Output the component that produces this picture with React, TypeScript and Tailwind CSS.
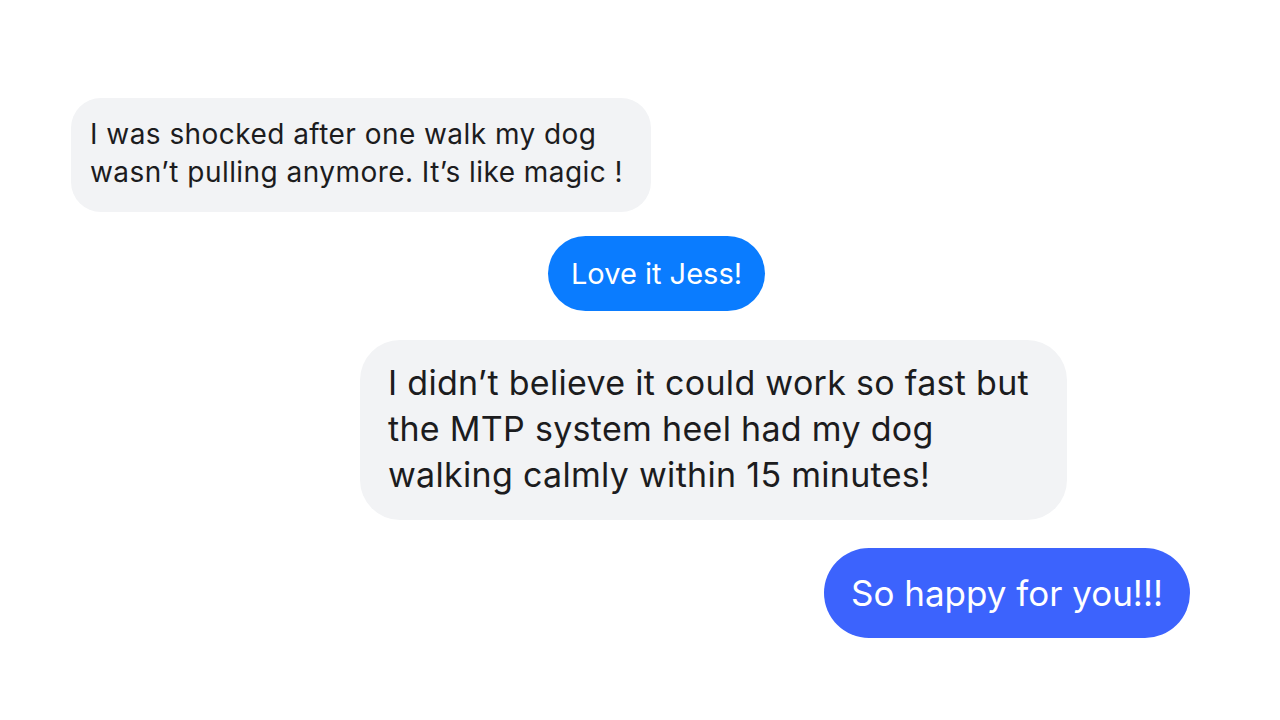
import React from "react";

const font = { fontFamily: "Inter, 'Noto Sans', 'Liberation Sans', sans-serif" };

export default function App() {
  return (
    <div className="w-[1280px] h-[720px] bg-white overflow-hidden" style={font}>
      <div className="flex flex-col pt-[98px]">
        <div className="ml-[71px] w-[580px] rounded-[30px] bg-[#f2f3f5] pl-[19px] pt-[17px] pb-[21px] text-[28px] leading-[38px] text-[#1c1c1e] tracking-[0.45px]">
          I was shocked after one walk my dog
          <br />
          wasn’t pulling anymore. It’s like magic !
        </div>

        <div className="mt-[24px] ml-[548px] w-[217px] h-[75px] flex items-center justify-center rounded-full bg-[#0a7cff] text-[29px] text-white">
          Love it Jess!
        </div>

        <div className="mt-[29px] ml-[360px] w-[707px] rounded-[40px] bg-[#f2f3f5] pl-[28px] pt-[20px] pb-[22px] text-[34px] leading-[46px] text-[#1c1c1e] tracking-[0.3px]">
          I didn’t believe it could work so fast but
          <br />
          the MTP system heel had my dog
          <br />
          walking calmly within 15 minutes!
        </div>

        <div className="mt-[28px] ml-[824px] w-[366px] h-[90px] flex items-center justify-center rounded-full bg-[#3c63fd] text-[35px] text-white">
          So happy for you!!!
        </div>
      </div>
    </div>
  );
}
